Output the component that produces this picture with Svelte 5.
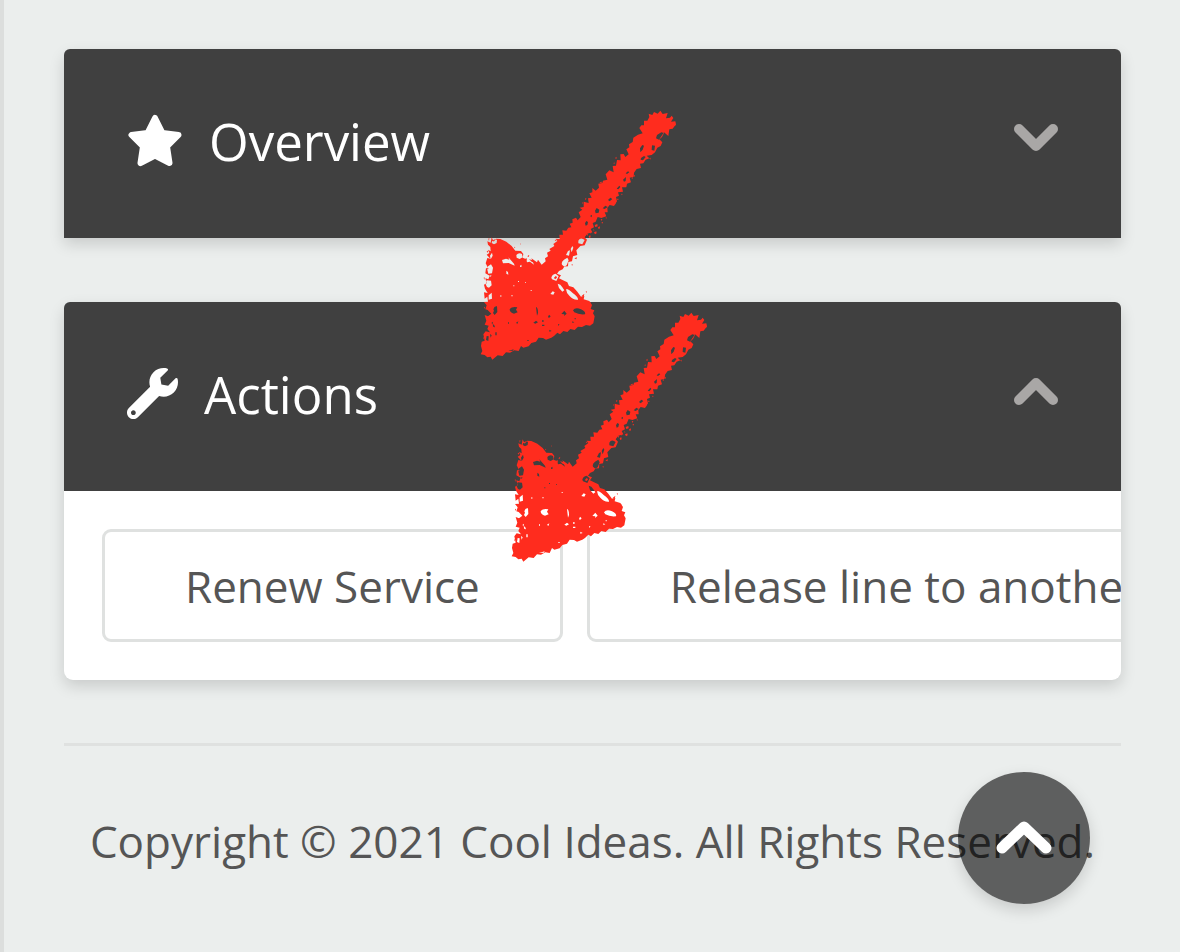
<script lang="ts">
  type Panel = {
    id: string;
    title: string;
    icon: "star" | "wrench";
    actions: string[];
  };

  const panels: Panel[] = [
    { id: "overview", title: "Overview", icon: "star", actions: [] },
    {
      id: "actions",
      title: "Actions",
      icon: "wrench",
      actions: ["Renew Service", "Release line to another"]
    }
  ];

  let open = $state<Record<string, boolean>>({ overview: false, actions: true });

  function toggle(id: string) {
    open[id] = !open[id];
  }

  function scrollToTop() {
    window.scrollTo({ top: 0, behavior: "smooth" });
  }
</script>

{#snippet arrow()}
  <svg viewBox="0 0 780 840" aria-hidden="true">
    <path
      fill-rule="evenodd"
      d="M568 66L566 56 577 60 582 51 593 56 601 47 608 57 623 54 618 70 630 68 635 62 640 69 633 80 646 79 648 88 638 101 628 103 625 123 612 112 598 133 607 142 602 153 592 158 585 172 575 180 560 182 568 190 557 194 550 205 540 206 543 219 530 222 522 233 521 245 509 248 513 262 501 266 499 277 486 277 489 290 474 292 477 302 468 306 471 319 462 333 449 330 442 339 443 352 434 352 439 364 424 369 413 366 407 380 398 384 402 397 392 402 397 412 382 416 374 427 381 434 374 451 361 453 349 466 352 480 339 484 336 499 325 501 324 514 314 513 308 523 297 528 291 536 303 541 297 550 309 556 322 562 327 573 340 577 352 590 363 605 373 603 371 613 388 618 396 630 392 642 403 646 399 655 404 664 400 685 390 692 378 690 366 696 354 695 344 705 331 702 322 711 310 708 300 718 292 713 282 723 274 728 258 734 249 729 236 728 228 740 214 744 206 754 190 758 183 753 176 768 163 766 150 773 138 772 128 783 113 781 97 794 92 785 82 787 74 780 62 778 67 768 63 753 65 740 74 737 70 718 77 709 90 712 82 702 86 692 74 689 79 677 74 660 84 664 94 656 83 645 76 643 80 631 72 621 84 620 82 605 74 611 72 592 83 594 75 581 72 569 80 565 76 550 85 553 89 542 76 535 78 519 86 523 77 505 82 489 91 491 80 479 88 474 84 464 92 469 91 456 84 449 82 439 92 443 95 427 101 440 108 431 121 432 139 440 155 453 166 467 183 468 190 477 188 488 199 493 201 502 210 500 222 509 214 490 231 502 234 494 245 509 257 499 255 490 264 484 261 473 272 467 268 462 283 453 280 447 292 438 287 431 299 432 298 419 309 419 307 406 319 407 325 398 334 397 329 386 338 383 337 373 348 368 353 376 362 366 356 352 367 344 359 338 371 336 371 320 386 324 384 310 395 308 388 295 397 292 397 279 407 287 417 278 415 266 427 264 429 257 442 254 437 238 448 226 461 232 458 213 468 212 471 195 482 196 481 178 491 177 496 186 506 178 499 163 508 157 507 148 518 141 520 128 534 119 548 115 538 99 544 91 552 91 552 77 562 77Z
      M597 134l-9-4 3-10 13-8 8 2-6 12zM541 172l-1-12 7-10 5 2-4 12zM575 165l1-14 9 1-2 15zM543 189l9-6 5 3-8 10-7-2zM497 235l7-6 4 3-7 5zM489 254l9-8-1 12-5 2zM470 281l8-9 3 4-6 7zM444 315l7-7 6 4-8 7zM428 340l8-8 7 4-9 6zM405 347l5-8 8 5-2 9-9 2zM375 385l4-7 5 3-2 9-5 2zM390 363l6-4-1 8zM355 437q5-9 14-5l5 3-7 13-12-3zM332 462l5-9 3 5-5 14zM306 509q-3-8 6-15l10-6 4 8-6 15-7 4zM318 480l6-12 6-2-3 16zM274 548q2-11 13-12l9 8-7 14-9-4-4-1zM282 548l6-6 3 6-6 5zM293 566l8 3 6 8 6 9-6 4-10-11zM271 597l7-8 6 3-4 7zM319 582q7 0 19 12 17 12 16 20-14 2-26-12-11-11-9-20zM97 437q9-8 14-2l-1 9-8 4-7-4zM169 480q7-8 17-3l2 10-9 5-9-4zM139 527l5 4 1 8-6-3zM126 495l12-4 10 3-3-7 17 19 2 6-18-8-17 1zM180 512l4-3 1 6-5 1zM84 514l9-6 6 10-3 17-11 1-3-12zM90 482l6-9 2 9-6 11zM77 568l3-12 13 1 2 14-8 7-6-2zM86 601l9-8 1 18-10 3zM88 543l6-3-1 5zM160 571h3v3h-3zM174 558h3v3h-3zM212 585h3v3h-3zM121 601h3v4h-3zM154 601h4v3h-4zM195 562h3v2h-3zM100 643q3-11 11-9l1 17-8 9-5-6 3-7zM149 642q7-8 23-5l-4 7 5 8-11 4q-13-3-13-14zM228 636q6 2 6 18l-3 8zM304 657l9-10 7 9-8 7 1-5zM339 646q7-10 24-3 15 7 12 15-18 2-32-6zM267 659l5 5-5 5-3-3zM220 683l8-6 6 5-8 4zM246 676h5v4h-5zM246 689h7v4h-7zM98 688q5-1 7 9l-5-1zM94 684l5-4-1 7zM106 712h4v9h-4zM80 723l6 1-1 14-7-3zM90 717l5 4-3 7zM168 683l7-4-3 8zM144 682h3v4h-3zM294 687l5 2-5 3zM268 704l7 4-7 2zM144 768l17-5-2 4zM202 735h4v3h-4zM337 679l6 3-6 2zM344 669h3v4h-3z"
    />
    <path
      d="M465 190l4-5 1 6zM460 205l3-3 1 5zM418 262l8-2-2 5zM375 310l5 1-4 4zM366 322l3 2-3 2zM514 249l4-3v6zM520 242l5-2-2 6zM484 296l4 1-3 4zM472 311h3v4h-3zM463 325h4l-2 4zM437 367l4 1-3 3zM430 345l9-3 1 6-7 2zM422 373l5-1-2 6zM404 390l8-3 1 7-7 2zM414 397l5-3 1 6-4 2zM402 412l7-3 1 6-5 3zM386 423l5-2 1 6-4 2zM389 408l6 2-3 6zM425 382h4v3h-4zM399 405l3-2 1 4zM343 490l8-3-2 6zM334 509l4-2-1 5zM380 418l4-1-2 6zM568 190l4-2-1 6zM163 455l3 2-3 3zM202 484l6-5-2 7zM194 492l7-2-2 7zM207 493l12 3 9 8-12-3zM80 469l4-2-1 7zM85 431l3-2-1 9zM181 445l2 2-2 2zM69 728l4-1-2 5zM72 637l3-2v7zM377 590l3-2v6zM387 620l5 2-4 4zM71 548l3-1-1 8zM75 603l4-4 1 6zM284 436l6-3-2 5zM640 94l8-8-1 5zM364 604l9-8-2 10z"
    />
  </svg>
{/snippet}

<div class="page">
  <main>
    {#each panels as panel}
      <section class="panel">
        <h2>
          <button
            class="heading"
            aria-expanded={open[panel.id]}
            onclick={() => toggle(panel.id)}
          >
            {#if panel.icon === "star"}
              <svg class="icon star" viewBox="0 0 56 54" aria-hidden="true">
                <path
                  d="M28 4L35.500 19L51.500 21L40 32.500L42.500 49L28 41.500L13.500 49L16 32.500L4.500 21L20.500 19Z"
                  fill="currentColor"
                  stroke="currentColor"
                  stroke-width="6"
                  stroke-linejoin="round"
                />
              </svg>
            {:else}
              <svg class="icon" viewBox="0 0 512 512" aria-hidden="true">
                <path
                  fill="currentColor"
                  d="M507.730 109.100c-2.240-9.030-13.540-12.090-20.120-5.510l-74.360 74.360-67.880-11.310-11.310-67.880 74.360-74.360c6.620-6.620 3.430-17.900-5.660-20.160-47.380-11.740-99.550.91-136.580 37.930-39.640 39.640-50.550 97.100-34.050 147.200L18.740 402.760c-24.990 24.990-24.990 65.510 0 90.500 24.990 24.990 65.510 24.990 90.500 0l213.210-213.210c50.120 16.710 107.470 5.680 147.370-34.220 37.070-37.070 49.700-89.320 37.910-136.730zM64 472c-13.250 0-24-10.750-24-24 0-13.260 10.750-24 24-24s24 10.740 24 24c0 13.250-10.750 24-24 24z"
                />
              </svg>
            {/if}
            <span>{panel.title}</span>
            <svg
              class="chevron"
              class:up={open[panel.id]}
              viewBox="0 0 44 28"
              aria-hidden="true"
            >
              <path d="M5 5L22 22L39 5" />
            </svg>
          </button>
        </h2>
        {#if open[panel.id] && panel.actions.length > 0}
          <div class="actions">
            {#each panel.actions as action}
              <button class="action">{action}</button>
            {/each}
          </div>
        {/if}
      </section>
    {/each}
  </main>

  <footer>
    <p>Copyright © 2021 Cool Ideas. All Rights Reserved.</p>
  </footer>

  <button class="to-top" aria-label="Back to top" onclick={scrollToTop}>
    <svg viewBox="0 0 56 36" aria-hidden="true">
      <path d="M6 28L28 7L50 28" />
    </svg>
  </button>

  <div class="marker first">{@render arrow()}</div>
  <div class="marker second">{@render arrow()}</div>
</div>

<style>
  :global(body) {
    margin: 0;
    background: #ebeeed;
  }

  .page {
    position: relative;
    box-sizing: border-box;
    min-height: 100vh;
    padding: 49px 59px 0 60px;
    border-left: 4px solid #dcdedd;
    overflow: hidden;
    font-family: "Open Sans", "Noto Sans", sans-serif;
    color: #555;
  }

  main {
    display: flex;
    flex-direction: column;
    gap: 64px;
  }

  .panel {
    border-radius: 9px;
    background: #fff;
    box-shadow: 0 6px 15px rgba(0, 0, 0, 0.15);
  }

  .panel:first-child {
    border-radius: 9px 9px 0 0;
  }

  h2 {
    margin: 0;
    font-weight: 400;
  }

  button {
    font: inherit;
    cursor: pointer;
  }

  .heading {
    display: flex;
    align-items: center;
    gap: 26px;
    width: 100%;
    height: 189px;
    padding: 0 63px 6px;
    border: 0;
    border-radius: 6px 6px 0 0;
    background: #404040;
    color: #fff;
    font-size: 51px;
    text-align: left;
  }

  .icon {
    flex: none;
    width: 51px;
    height: 51px;
  }

  .star {
    width: 56px;
    height: 54px;
  }

  .chevron {
    width: 44px;
    height: 28px;
    margin-left: auto;
    margin-bottom: 6px;
    fill: none;
    stroke: #a9a7a6;
    stroke-width: 10;
    stroke-linecap: round;
    stroke-linejoin: round;
  }

  .chevron.up {
    transform: rotate(180deg);
  }

  .actions {
    display: flex;
    gap: 24px;
    padding: 38px;
    overflow-x: auto;
    scrollbar-width: none;
    border-radius: 0 0 9px 9px;
  }

  .action {
    flex: none;
    height: 113px;
    padding: 0 80px;
    border: 3px solid #dfe1e0;
    border-radius: 9px;
    background: #fff;
    color: #555;
    font-size: 44px;
    white-space: nowrap;
  }

  footer {
    margin-top: 63px;
    padding: 62px 0;
    border-top: 3px solid #dfe1e0;
    text-align: center;
    font-size: 44px;
    line-height: 66px;
    white-space: nowrap;
  }

  footer p {
    margin: 0;
  }

  .to-top {
    position: absolute;
    right: 90px;
    bottom: 48px;
    display: grid;
    place-items: center;
    width: 132px;
    height: 132px;
    padding: 0;
    border: 0;
    border-radius: 50%;
    background: rgba(0, 0, 0, 0.6);
    box-shadow: 0 6px 15px rgba(0, 0, 0, 0.15);
  }

  .to-top svg {
    width: 56px;
    height: 36px;
    fill: none;
    stroke: #fff;
    stroke-width: 11;
    stroke-linecap: round;
    stroke-linejoin: round;
  }

  .marker {
    position: absolute;
    width: 260px;
    height: 280px;
    pointer-events: none;
  }

  .marker svg {
    display: block;
    width: 100%;
    height: 100%;
    fill: #ff2c1e;
  }

  .first {
    left: 456px;
    top: 95px;
  }

  .second {
    left: 487px;
    top: 297px;
  }
</style>
